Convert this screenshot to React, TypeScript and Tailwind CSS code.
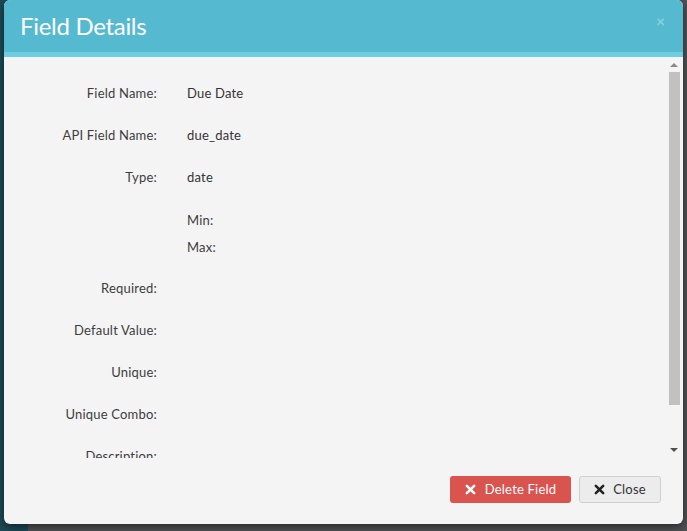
import React from "react";

const rows: { label: string; value?: string }[] = [
  { label: "Field Name:", value: "Due Date" },
  { label: "API Field Name:", value: "due_date" },
  { label: "Type:", value: "date" },
];
const rows2: string[] = ["Required:", "Default Value:", "Unique:", "Unique Combo:", "Description:"];

function XIcon({ className }: { className?: string }) {
  return (
    <svg viewBox="0 0 12 12" className={className} aria-hidden="true">
      <path d="M2 2 L10 10 M10 2 L2 10" stroke="currentColor" strokeWidth="2.8" strokeLinecap="round" fill="none" />
    </svg>
  );
}

export default function App() {
  return (
    <div className="relative w-[687px] h-[531px] overflow-hidden bg-[#4f5152] flex" style={{ fontFamily: "Lato, 'Open Sans', sans-serif" }}>
      <div className="w-[28px] h-full bg-[#1d4a55]" />
      <div className="flex-1 flex flex-col">
        <div className="h-[220px]" />
      </div>
      <div className="absolute left-[4px] top-0 w-[679px] h-[524px] rounded-[6px] overflow-hidden bg-[#f4f4f4] flex flex-col shadow-[0_3px_8px_rgba(0,0,0,0.5)]">
        <div className="h-[52px] shrink-0 bg-[#55b9cf] flex items-center justify-between pl-[16px] pr-[18px]">
          <div className="text-white text-[24px] leading-none tracking-[-0.3px] pb-[1px]">Field Details</div>
          <div className="text-[#86d2e2] text-[15px] font-bold leading-none pb-[10px]">×</div>
        </div>
        <div className="h-[5px] shrink-0 bg-[#6dcde3]" />
        <div className="h-[401px] shrink-0 flex">
          <div className="flex-1 overflow-hidden pt-[16px] text-[13px] tracking-[0.2px] text-[#3d3d3d]">
            {rows.map((r) => (
              <div key={r.label} className="h-[42px] flex items-center">
                <div className="w-[153px] text-right">{r.label}</div>
                <div className="pl-[30px] text-[#333]">{r.value}</div>
              </div>
            ))}
            <div className="h-[69px] pt-[8px] flex">
              <div className="w-[153px]" />
              <div className="pl-[30px] flex flex-col">
                <div className="h-[27px] flex items-center">Min:</div>
                <div className="h-[27px] flex items-center">Max:</div>
              </div>
            </div>
            {rows2.map((l) => (
              <div key={l} className="h-[42px] flex items-center">
                <div className="w-[153px] text-right">{l}</div>
              </div>
            ))}
          </div>
          <div className="w-[15px] shrink-0 flex flex-col items-center pr-[3px]">
            <div className="h-[15px] flex items-center justify-center">
              <div className="w-0 h-0 border-l-[4px] border-r-[4px] border-b-[4px] border-l-transparent border-r-transparent border-b-[#8a8a8a]" />
            </div>
            <div className="w-[11px] h-[333px] bg-[#c1c1c1]" />
            <div className="flex-1" />
            <div className="h-[16px] flex items-center justify-center">
              <div className="w-0 h-0 border-l-[4px] border-r-[4px] border-t-[4px] border-l-transparent border-r-transparent border-t-[#505050]" />
            </div>
          </div>
        </div>
        <div className="flex-1 flex justify-end items-start pt-[18px] pr-[22px] gap-[8px]">
          <button className="h-[27px] w-[121px] rounded-[3px] bg-[#d9534f] text-white text-[13px] tracking-[0.2px] flex items-center justify-center gap-[9px]">
            <XIcon className="w-[11px] h-[11px]" />
            <span>Delete Field</span>
          </button>
          <button className="h-[27px] w-[82px] rounded-[3px] bg-[#ececec] border border-[#cfcfcf] text-[#333] text-[13px] tracking-[0.2px] flex items-center justify-center gap-[8px]">
            <XIcon className="w-[11px] h-[11px] text-[#222]" />
            <span>Close</span>
          </button>
        </div>
      </div>
    </div>
  );
}
